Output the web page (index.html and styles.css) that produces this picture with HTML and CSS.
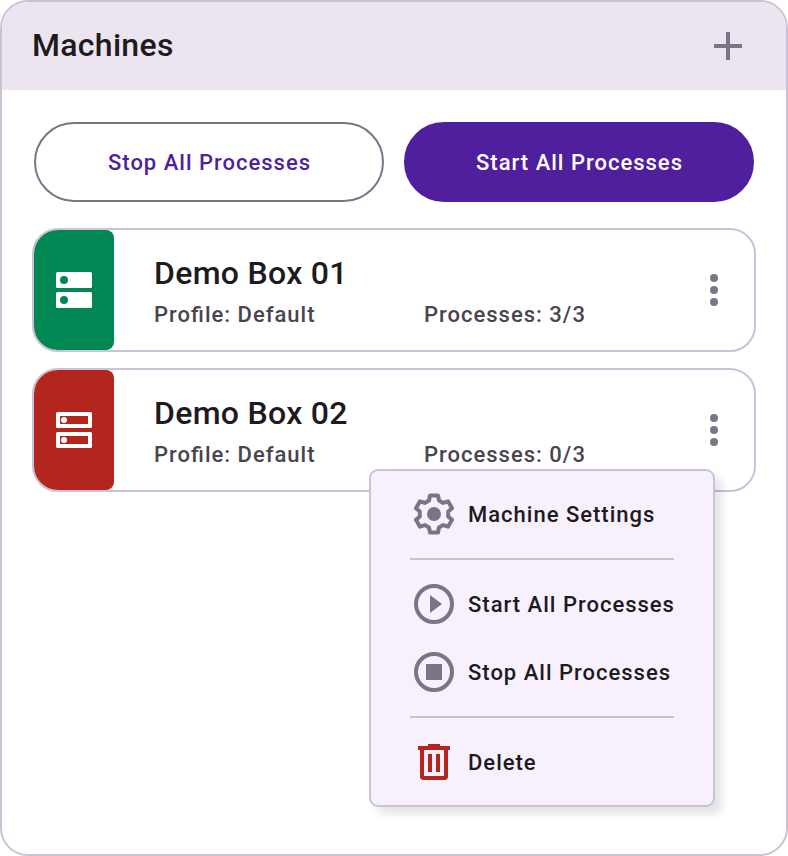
FILE: index.html
```html
<!DOCTYPE html>
<html lang="en">
<head>
<meta charset="utf-8">
<title>Machines</title>
<link rel="stylesheet" href="styles.css">
</head>
<body>
<main class="panel">
  <header class="panel-header">
    <h1 class="title">Machines</h1>
    <button class="icon-button" aria-label="Add machine">
      <svg width="28" height="28" viewBox="0 0 28 28" fill="currentColor"><path d="M12 0h4v12h12v4H16v12h-4V16H0v-4h12z"/></svg>
    </button>
  </header>
  <div class="actions">
    <button class="button button-outlined">Stop All Processes</button>
    <button class="button button-filled">Start All Processes</button>
  </div>
  <section class="machines">
    <article class="card">
      <div class="status status-on">
        <svg width="36" height="36" viewBox="0 0 36 36" fill="#fff" fill-rule="evenodd"><path d="M1.5 0h33A1.5 1.5 0 0 1 36 1.5v13a1.5 1.5 0 0 1-1.5 1.5h-33A1.5 1.5 0 0 1 0 14.5v-13A1.5 1.5 0 0 1 1.5 0zM8 4a4 4 0 1 0 0 8 4 4 0 0 0 0-8z"/><path d="M1.5 20h33a1.5 1.5 0 0 1 1.5 1.5v13a1.5 1.5 0 0 1-1.5 1.5h-33A1.5 1.5 0 0 1 0 34.5v-13A1.5 1.5 0 0 1 1.5 20zM8 24a4 4 0 1 0 0 8 4 4 0 0 0 0-8z"/></svg>
      </div>
      <div class="info">
        <h2 class="title">Demo Box 01</h2>
        <div class="details"><span class="profile">Profile: Default</span><span>Processes: 3/3</span></div>
      </div>
      <button class="icon-button more" aria-label="More">
        <svg width="8" height="32" viewBox="0 0 8 32" fill="currentColor"><circle cx="4" cy="4" r="4"/><circle cx="4" cy="16" r="4"/><circle cx="4" cy="28" r="4"/></svg>
      </button>
    </article>
    <article class="card">
      <div class="status status-off">
        <svg width="36" height="36" viewBox="0 0 36 36" fill="#fff" fill-rule="evenodd"><path d="M1.5 0h33A1.5 1.5 0 0 1 36 1.5v13a1.5 1.5 0 0 1-1.5 1.5h-33A1.5 1.5 0 0 1 0 14.5v-13A1.5 1.5 0 0 1 1.5 0zM4 4v8h28V4z"/><path d="M1.5 20h33a1.5 1.5 0 0 1 1.5 1.5v13a1.5 1.5 0 0 1-1.5 1.5h-33A1.5 1.5 0 0 1 0 34.5v-13A1.5 1.5 0 0 1 1.5 20zM4 24v8h28v-8z"/><circle cx="8" cy="8" r="3"/><circle cx="8" cy="28" r="3"/></svg>
      </div>
      <div class="info">
        <h2 class="title">Demo Box 02</h2>
        <div class="details"><span class="profile">Profile: Default</span><span>Processes: 0/3</span></div>
      </div>
      <button class="icon-button more" aria-label="More">
        <svg width="8" height="32" viewBox="0 0 8 32" fill="currentColor"><circle cx="4" cy="4" r="4"/><circle cx="4" cy="16" r="4"/><circle cx="4" cy="28" r="4"/></svg>
      </button>
      <nav class="menu">
        <a class="menu-item">
          <svg class="menu-icon" viewBox="-24 -24 48 48" fill="currentColor"><path d="M-5-13.5-4-18.5H4L5-13.5 9.19-11.08 14.02-12.71 18.02-5.79 14.19-2.42V2.42L18.02 5.79 14.02 12.71 9.19 11.08 5 13.5 4 18.5H-4L-5 13.5-9.19 11.08-14.02 12.71-18.02 5.79-14.19 2.42V-2.42L-18.02-5.79-14.02-12.71-9.19-11.08z" fill="none" stroke="currentColor" stroke-width="4" stroke-linejoin="round"/><circle r="7"/></svg>
          <span>Machine Settings</span>
        </a>
        <hr class="divider">
        <a class="menu-item">
          <svg class="menu-icon" viewBox="0 0 24 24" fill="currentColor"><circle cx="12" cy="12" r="9" fill="none" stroke="currentColor" stroke-width="2"/><path d="M10 7.5v9l6-4.5z"/></svg>
          <span>Start All Processes</span>
        </a>
        <a class="menu-item">
          <svg class="menu-icon" viewBox="0 0 24 24" fill="currentColor"><circle cx="12" cy="12" r="9" fill="none" stroke="currentColor" stroke-width="2"/><path d="M8 8h8v8H8z"/></svg>
          <span>Stop All Processes</span>
        </a>
        <hr class="divider">
        <a class="menu-item">
          <svg class="menu-icon danger" viewBox="0 0 48 48" fill="currentColor"><path d="M18 6h12v2h10v4H8V8h10z"/><path d="M12 10v28.5a1.5 1.5 0 0 0 1.5 1.5h21a1.5 1.5 0 0 0 1.5-1.5V10" fill="none" stroke="currentColor" stroke-width="4"/><path d="M18 16h4v18h-4zM26 16h4v18h-4z"/></svg>
          <span>Delete</span>
        </a>
      </nav>
    </article>
  </section>
</main>
</body>
</html>
```
FILE: styles.css
```css
* {
  box-sizing: border-box;
}

body {
  margin: 0;
  background: #fff;
  color: #1d1b20;
  font: 500 22px/32px Roboto, "Liberation Sans", sans-serif;
  letter-spacing: 1px;
}

.panel {
  height: 856px;
  border: 2px solid #cac2d6;
  border-radius: 28px;
  background: #fff;
}

.panel-header {
  display: flex;
  align-items: center;
  justify-content: space-between;
  height: 88px;
  padding: 0 44px 0 30px;
  border-radius: 26px 26px 0 0;
  background: #ece5f0;
}

.title {
  margin: 0;
  font-size: 32px;
  font-weight: 500;
  line-height: 48px;
  letter-spacing: 0.3px;
}

.panel-header .title {
  padding-bottom: 2px;
}

.icon-button {
  display: flex;
  padding: 0;
  border: 0;
  background: none;
  color: #7b7487;
}

.actions {
  display: flex;
  gap: 20px;
  padding: 32px 32px 26px;
}

.button {
  flex: 1;
  height: 80px;
  padding: 2px 0 0 1px;
  border: 2px solid #7b7487;
  border-radius: 40px;
  font: inherit;
  letter-spacing: inherit;
}

.button-outlined {
  background: #fff;
  color: #4f1f9e;
}

.button-filled {
  border-color: #4f1f9e;
  background: #4f1f9e;
  color: #fff;
}

.machines {
  display: flex;
  flex-direction: column;
  gap: 16px;
  padding: 0 30px;
}

.card {
  position: relative;
  display: flex;
  height: 124px;
  border: 2px solid #cac2d6;
  border-radius: 26px;
}

.status {
  display: flex;
  align-items: center;
  justify-content: center;
  width: 80px;
  border-radius: 24px 8px 8px 24px;
}

.status-on {
  background: #008753;
}

.status-off {
  background: #b3261e;
}

.info {
  flex: 1;
  padding: 19px 0 0 40px;
}

.details {
  display: flex;
  margin-top: 2px;
  color: #49454f;
  font-feature-settings: "liga" 1;
}

.profile {
  width: 270px;
}

.more {
  align-items: center;
  margin-right: 36px;
}

.menu {
  position: absolute;
  top: 99px;
  right: 39px;
  display: flex;
  flex-direction: column;
  gap: 20px;
  width: 346px;
  padding: 19px 39px;
  border: 2px solid #cac2d6;
  border-radius: 9px;
  background: #f8f1fd;
  box-shadow: 7px 7px 8px rgba(0, 0, 0, 0.11);
}

.menu-item {
  display: flex;
  align-items: center;
  gap: 10px;
  white-space: nowrap;
}

.menu-item span {
  padding-top: 2px;
}

.menu-icon {
  flex: none;
  width: 48px;
  height: 48px;
  color: #7b7487;
}

.danger {
  color: #b3261e;
}

.divider {
  width: 100%;
  height: 2px;
  margin: 0;
  border: 0;
  background: #cac2d6;
}
```
